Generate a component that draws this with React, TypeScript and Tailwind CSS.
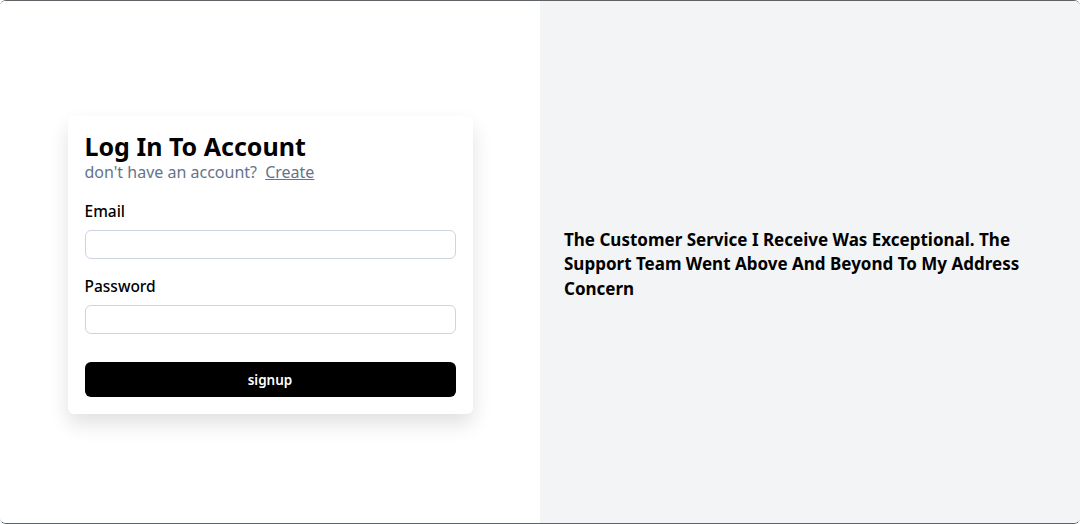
const font = { fontFamily: '"Segoe UI", "Noto Sans", sans-serif' };

function Field({ label, type }: { label: string; type: string }) {
  return (
    <div className="flex flex-col gap-[7px]">
      <label className="text-[15.5px] leading-[24px] font-medium text-black">{label}</label>
      <input
        type={type}
        className="h-[29px] w-full rounded-md border border-[#cbd5e1] bg-white px-2 outline-none"
      />
    </div>
  );
}

export default function App() {
  return (
    <div
      className="grid h-[524px] w-full grid-cols-2 overflow-hidden rounded-[6px] border-y border-[#5f6368]"
      style={font}
    >
      <div className="flex items-center justify-center bg-white pt-[6px]">
        <div className="w-3/4 rounded-md bg-white px-[17px] pt-[15px] pb-[17px] shadow-[0_10px_20px_rgba(0,0,0,0.12)]">
          <h1 className="text-[25px] font-bold leading-[30px] text-black">Log In To Account</h1>
          <p className="text-[16px] leading-[22px] text-[#64748b]">
            don't have an account?{" "}
            <a href="#" className="ml-[4px] underline">
              Create
            </a>
          </p>
          <div className="mt-[16px] flex flex-col gap-[15px]">
            <Field label="Email" type="email" />
            <Field label="Password" type="password" />
          </div>
          <button className="mt-[28px] h-[35px] w-full rounded-md bg-black pt-[2px] text-[13.5px] font-semibold text-white">
            signup
          </button>
        </div>
      </div>
      <div className="flex items-center bg-[#f3f4f6] px-6 pt-[5px]">
        <p className="text-[17px] font-bold leading-[24.5px] text-black">
          The Customer Service I Receive Was Exceptional. The Support Team Went Above And Beyond To My
          Address Concern
        </p>
      </div>
    </div>
  );
}
